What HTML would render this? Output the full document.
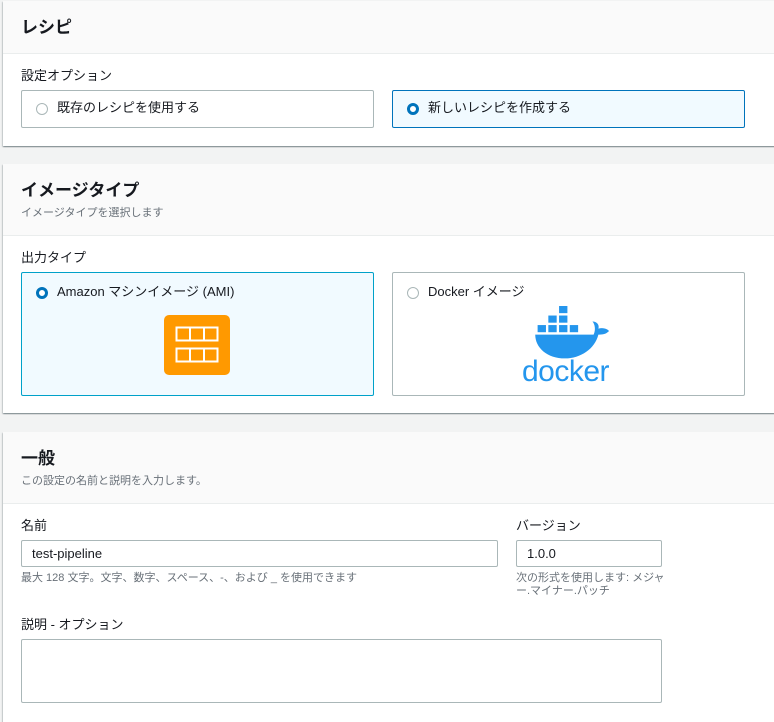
<!DOCTYPE html>
<html><head><meta charset="utf-8"><style>
*{box-sizing:border-box;margin:0;padding:0}
body{width:774px;height:707px;overflow:hidden;background:#f2f3f3;font-family:"Liberation Sans","Noto Sans CJK JP",sans-serif;color:#16191f;position:relative}
.p{position:absolute;left:3px;width:790px;background:#fff;box-shadow:0 1px 1px rgba(0,28,36,.3),1px 1px 1px rgba(0,28,36,.15),-1px 1px 1px rgba(0,28,36,.15)}
.h{background:#fafafa;border-bottom:1px solid #eaeded;padding:16px 18px 0}
.h b{font-size:17px;font-weight:700;display:block;line-height:22px}
.h small{font-size:11px;color:#687078;display:block;margin-top:2px}
.a{position:absolute}
.lbl{font-size:13px;line-height:16px}
.box{position:absolute;border:1px solid #aab7b8;background:#fff;border-radius:2px}
.sel{border-color:#0073bb;background:#f1faff}
.rad{position:absolute;width:12px;height:12px;border-radius:50%;border:1px solid #aab7b8;background:#fff}
.rad.on{border:3.5px solid #0073bb}
.t{position:absolute;font-size:13px;line-height:16px}
.in{position:absolute;border:1px solid #aab7b8;background:#fff;border-radius:2px;font-size:13px;padding:5px 10px}
.hint{position:absolute;font-size:11px;color:#687078;line-height:13px}
</style></head><body>
<div class="p" style="top:1px;height:145px"><div class="h" style="height:53px"><b>レシピ</b></div></div>
<div class="a lbl" style="left:21px;top:68px">設定オプション</div>
<div class="box" style="left:21px;top:90px;width:353px;height:38px"><div class="rad" style="left:14px;top:12px"></div><div class="t" style="left:35px;top:9px">既存のレシピを使用する</div></div>
<div class="box sel" style="left:392px;top:90px;width:353px;height:38px"><div class="rad on" style="left:14px;top:12px"></div><div class="t" style="left:35px;top:9px">新しいレシピを作成する</div></div>

<div class="p" style="top:164px;height:249px"><div class="h" style="height:72px"><b>イメージタイプ</b><small>イメージタイプを選択します</small></div></div>
<div class="a lbl" style="left:21px;top:250px">出力タイプ</div>
<div class="box sel" style="left:21px;top:272px;width:353px;height:124px;border-color:#00a1c9"><div class="rad on" style="left:14px;top:14px"></div><div class="t" style="left:35px;top:11px">Amazon マシンイメージ (AMI)</div>
<svg class="a" style="left:142px;top:42px" width="66" height="60" viewBox="0 0 66 60"><rect width="66" height="60" rx="5" fill="#ff9900"/><g fill="none" stroke="#fff" stroke-width="2"><rect x="12.5" y="12.5" width="41" height="13"/><rect x="12.5" y="33.5" width="41" height="13"/><path d="M26 12v14M40 12v14M26 33v14M40 33v14"/></g></svg></div>
<div class="box" style="left:392px;top:272px;width:353px;height:124px"><div class="rad" style="left:14px;top:14px"></div><div class="t" style="left:35px;top:11px">Docker イメージ</div>
<svg class="a" style="left:130px;top:33px" width="90" height="56" viewBox="0 0 75 47"><g fill="#2496ed"><rect x="30" y="0" width="7" height="6"/><rect x="21" y="8" width="7" height="6"/><rect x="30" y="8" width="7" height="6"/><rect x="12" y="16" width="7" height="6"/><rect x="21" y="16" width="7" height="6"/><rect x="30" y="16" width="7" height="6"/><rect x="39" y="16" width="7" height="6"/><path d="M10 24h49c2-4 1-9-1-11 4 0 6 3 5 6 4-1 7 0 9 2-3 3-6 3-9 3-3 12-15 20-28 20C20 44 10 35 10 24z"/></g></svg>
<div class="a" style="left:129px;top:83px;font-size:30px;color:#2496ed;letter-spacing:-0.5px;line-height:32px">docker</div></div>

<div class="p" style="top:432px;height:290px"><div class="h" style="height:72px"><b>一般</b><small>この設定の名前と説明を入力します。</small></div></div>
<div class="a lbl" style="left:21px;top:518px">名前</div>
<div class="in" style="left:21px;top:540px;width:477px;height:27px">test-pipeline</div>
<div class="hint" style="left:21px;top:572px">最大 128 文字。文字、数字、スペース、-、および _ を使用できます</div>
<div class="a lbl" style="left:516px;top:518px">バージョン</div>
<div class="in" style="left:516px;top:540px;width:146px;height:27px">1.0.0</div>
<div class="hint" style="left:516px;top:572px;width:150px">次の形式を使用します: メジャー.マイナー.パッチ</div>
<div class="a lbl" style="left:21px;top:617px">説明 - オプション</div>
<div class="in" style="left:21px;top:639px;width:641px;height:64px"></div>
</body></html>
